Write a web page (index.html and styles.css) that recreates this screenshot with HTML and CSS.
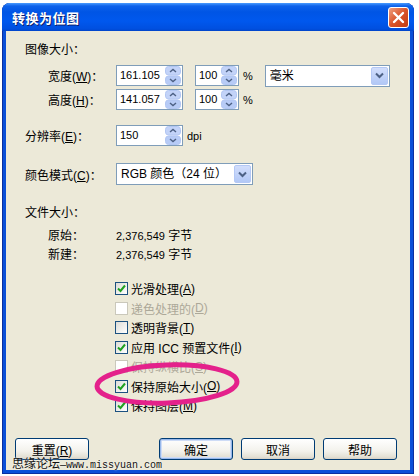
FILE: index.html
```html
<!DOCTYPE html>
<html lang="zh-CN">
<head>
  <meta charset="UTF-8" />
  <title>转换为位图</title>
  <link rel="stylesheet" href="styles.css">
</head>
<body>
  <div class="window">
    <div class="titlebar">
      <span class="title">转换为位图</span>
      <span class="close">
        <svg width="13" height="13" viewBox="0 0 13 13"><path d="M2 2 L11 11 M11 2 L2 11" stroke="#fff" stroke-width="2.4" stroke-linecap="round"/></svg>
      </span>
    </div>
    <div class="client">
      <div class="group-title">图像大小：</div>
      <div class="row size-row first">
        <span class="label sub">宽度(<u>W</u>)：</span>
        <div class="spin num-box"><span class="val">161.105</span><span class="spin-btn"><svg width="16" height="19" viewBox="0 0 16 19"><rect x="0.5" y="0.5" width="15" height="8.5" rx="3" fill="#c3d3f8" stroke="#b2c6f2"/><rect x="0.5" y="10" width="15" height="8.5" rx="3" fill="#b7cbf6" stroke="#b2c6f2"/><path d="M5 6 L8 3.5 L11 6 M5 13 L8 15.5 L11 13" fill="none" stroke="#4d6185" stroke-width="1.4"/></svg></span></div>
        <div class="spin pct-box"><span class="val">100</span><span class="spin-btn"><svg width="16" height="19" viewBox="0 0 16 19"><rect x="0.5" y="0.5" width="15" height="8.5" rx="3" fill="#c3d3f8" stroke="#b2c6f2"/><rect x="0.5" y="10" width="15" height="8.5" rx="3" fill="#b7cbf6" stroke="#b2c6f2"/><path d="M5 6 L8 3.5 L11 6 M5 13 L8 15.5 L11 13" fill="none" stroke="#4d6185" stroke-width="1.4"/></svg></span></div>
        <span class="unit">%</span>
        <div class="select unit-select"><span class="txt">毫米</span><span class="drop"><svg width="9" height="7" viewBox="0 0 9 7"><path d="M1 1.5 L4.5 5 L8 1.5" fill="none" stroke="#4d6185" stroke-width="2"/></svg></span></div>
      </div>
      <div class="row size-row">
        <span class="label sub">高度(<u>H</u>)：</span>
        <div class="spin num-box"><span class="val">141.057</span><span class="spin-btn"><svg width="16" height="19" viewBox="0 0 16 19"><rect x="0.5" y="0.5" width="15" height="8.5" rx="3" fill="#c3d3f8" stroke="#b2c6f2"/><rect x="0.5" y="10" width="15" height="8.5" rx="3" fill="#b7cbf6" stroke="#b2c6f2"/><path d="M5 6 L8 3.5 L11 6 M5 13 L8 15.5 L11 13" fill="none" stroke="#4d6185" stroke-width="1.4"/></svg></span></div>
        <div class="spin pct-box"><span class="val">100</span><span class="spin-btn"><svg width="16" height="19" viewBox="0 0 16 19"><rect x="0.5" y="0.5" width="15" height="8.5" rx="3" fill="#c3d3f8" stroke="#b2c6f2"/><rect x="0.5" y="10" width="15" height="8.5" rx="3" fill="#b7cbf6" stroke="#b2c6f2"/><path d="M5 6 L8 3.5 L11 6 M5 13 L8 15.5 L11 13" fill="none" stroke="#4d6185" stroke-width="1.4"/></svg></span></div>
        <span class="unit">%</span>
      </div>
      <div class="row res-row">
        <span class="label">分辨率(<u>E</u>)：</span>
        <div class="spin num-box"><span class="val">150</span><span class="spin-btn"><svg width="16" height="19" viewBox="0 0 16 19"><rect x="0.5" y="0.5" width="15" height="8.5" rx="3" fill="#c3d3f8" stroke="#b2c6f2"/><rect x="0.5" y="10" width="15" height="8.5" rx="3" fill="#b7cbf6" stroke="#b2c6f2"/><path d="M5 6 L8 3.5 L11 6 M5 13 L8 15.5 L11 13" fill="none" stroke="#4d6185" stroke-width="1.4"/></svg></span></div>
        <span class="unit dpi">dpi</span>
      </div>
      <div class="row mode-row">
        <span class="label">颜色模式(<u>C</u>)：</span>
        <div class="select mode-select"><span class="txt">RGB 颜色（24 位）</span><span class="drop"><svg width="9" height="7" viewBox="0 0 9 7"><path d="M1 1.5 L4.5 5 L8 1.5" fill="none" stroke="#4d6185" stroke-width="2"/></svg></span></div>
      </div>
      <div class="group-title file-title">文件大小：</div>
      <div class="info-row first">
        <span class="label sub">原始：</span>
        <span class="num">2,376,549</span>&nbsp;字节
      </div>
      <div class="info-row">
        <span class="label sub">新建：</span>
        <span class="num">2,376,549</span>&nbsp;字节
      </div>
      <div class="checks">
        <div class="check on"><span class="box"><svg width="11" height="11" viewBox="0 0 11 11"><path d="M2 5.5 L4.5 8 L9 2.5" fill="none" stroke="#21a121" stroke-width="2"/></svg></span>光滑处理(<u>A</u>)</div>
        <div class="check disabled"><span class="box"></span>递色处理的(<u>D</u>)</div>
        <div class="check"><span class="box"></span>透明背景(<u>T</u>)</div>
        <div class="check on"><span class="box"><svg width="11" height="11" viewBox="0 0 11 11"><path d="M2 5.5 L4.5 8 L9 2.5" fill="none" stroke="#21a121" stroke-width="2"/></svg></span>应用 ICC 预置文件(<u>I</u>)</div>
        <div class="check disabled"><span class="box"></span>保持纵横比(<u>S</u>)</div>
        <div class="check on"><span class="box"><svg width="11" height="11" viewBox="0 0 11 11"><path d="M2 5.5 L4.5 8 L9 2.5" fill="none" stroke="#21a121" stroke-width="2"/></svg></span>保持原始大小(<u>O</u>)</div>
        <div class="check on"><span class="box"><svg width="11" height="11" viewBox="0 0 11 11"><path d="M2 5.5 L4.5 8 L9 2.5" fill="none" stroke="#21a121" stroke-width="2"/></svg></span>保持图层(<u>M</u>)</div>
      </div>
      <div class="buttons">
        <button class="btn">重置(<u>R</u>)</button>
        <button class="btn default ok">确定</button>
        <button class="btn">取消</button>
        <button class="btn">帮助</button>
      </div>
    </div>
    <svg class="mark" width="154" height="54" viewBox="0 0 154 54">
      <ellipse cx="76" cy="26" rx="70" ry="19" transform="rotate(-2 76 26)" fill="none" stroke="#e4218b" stroke-width="5"/>
    </svg>
    <div class="watermark">思缘论坛<span class="site">—www.missyuan.com</span></div>
  </div>
</body>
</html>
```

FILE: styles.css
```css
body {
  margin: 0;
  background: #fff;
  font-family: "Liberation Sans", "Noto Sans CJK SC", sans-serif;
  font-size: 12px;
  color: #000;
}
.window {
  position: relative;
  width: 412px;
  margin: 3px 0 0 2px;
  padding-bottom: 4px;
  background: #0a4fd8;
  border-radius: 8px 8px 0 0;
  box-shadow: inset 1px 0 #0a2fa0, inset -1px 0 #0a2fa0, inset 0 -1px #0a2fa0;
}
.titlebar {
  height: 28px;
  display: flex;
  align-items: center;
  justify-content: space-between;
  padding: 0 5px 0 10px;
  border-radius: 8px 8px 0 0;
  background: linear-gradient(#4a9cff 0, #0f62ea 3px, #0055e5 9px, #0058ee 18px, #004fdf 26px, #0044c8 28px);
}
.title {
  color: #fff;
  font-weight: bold;
  font-size: 13px;
  text-shadow: 1px 1px #0a1e6e;
  letter-spacing: 0.5px;
}
.close {
  width: 19px;
  height: 19px;
  display: flex;
  align-items: center;
  justify-content: center;
  border: 1px solid #fff;
  border-radius: 3px;
  background: linear-gradient(135deg, #f0a080, #d9532a 50%, #c13c12);
}
.client {
  margin: 0 4px;
  height: 439px;
  box-sizing: border-box;
  padding: 0 0 10px 19px;
  background: #ece9d8;
  display: flex;
  flex-direction: column;
}
.group-title {
  line-height: 16px;
  margin-top: 11px;
}
.file-title {
  margin-top: 20px;
}
.row {
  display: flex;
  align-items: center;
  height: 21px;
}
.size-row {
  margin-top: 3px;
}
.size-row.first {
  margin-top: 7px;
}
.res-row {
  margin-top: 15px;
}
.mode-row {
  margin-top: 17px;
  height: 22px;
}
.label {
  width: 91px;
  flex-shrink: 0;
  box-sizing: border-box;
}
.label.sub {
  padding-left: 23px;
}
.spin {
  display: flex;
  height: 21px;
  box-sizing: border-box;
  border: 1px solid #7f9db9;
  background: #fff;
}
.spin .val {
  flex: 1;
  padding-left: 3px;
  line-height: 19px;
  font-size: 11px;
}
.spin-btn {
  display: flex;
  margin: 0 1px 0 0;
}
.num-box {
  width: 67px;
}
.pct-box {
  width: 44px;
  margin-left: 12px;
}
.unit {
  margin-left: 4px;
  font-size: 11px;
}
.unit.dpi {
  margin-left: 4px;
}
.select {
  display: flex;
  height: 22px;
  box-sizing: border-box;
  border: 1px solid #7f9db9;
  background: #fff;
}
.select .txt {
  flex: 1;
  padding-left: 4px;
  line-height: 20px;
}
.drop {
  width: 15px;
  margin: 1px;
  display: flex;
  align-items: center;
  justify-content: center;
  border: 1px solid #b4c8f5;
  border-radius: 2px;
  background: linear-gradient(#d2defc, #b2c8f6);
}
.unit-select {
  width: 125px;
  margin-left: 12px;
}
.mode-select {
  width: 137px;
}
.info-row {
  display: flex;
  align-items: center;
  line-height: 16px;
  margin-top: 3px;
}
.info-row.first {
  margin-top: 7px;
}
.num {
  font-size: 11px;
}
.checks {
  margin-top: 16px;
  padding-left: 90px;
}
.check {
  display: flex;
  align-items: center;
  height: 19.5px;
}
.box {
  width: 13px;
  height: 13px;
  box-sizing: border-box;
  margin-right: 3px;
  border: 1px solid #1c5180;
  background: linear-gradient(135deg, #dcdcd7, #fff);
  display: flex;
  align-items: center;
  justify-content: center;
}
.check.disabled {
  color: #aca899;
}
.check.disabled .box {
  border-color: #cac8bb;
  background: #fff;
}
.buttons {
  margin-top: auto;
  margin-left: -10px;
  margin-right: 13px;
  display: flex;
  gap: 8px;
}
.btn {
  width: 74px;
  height: 22px;
  padding: 0;
  border: 1px solid #003c74;
  border-radius: 3px;
  background: linear-gradient(#fff, #f3f2ec 60%, #e3e0d4 90%, #d6d0c5);
  font-family: "Liberation Sans", "Noto Sans CJK SC", sans-serif;
  font-size: 12px;
  color: #000;
}
.btn.ok {
  margin-left: auto;
}
.btn.default {
  box-shadow: inset 0 0 0 1px #98b8ea, inset 0 0 0 2px #cedcf6;
}
.mark {
  position: absolute;
  left: 89px;
  top: 355px;
}
.watermark {
  position: absolute;
  left: 10px;
  top: 451px;
  font-size: 12px;
  color: #111;
  text-shadow: 0 0 2px #fff;
}
.watermark .site {
  font-family: "Liberation Mono", monospace;
  font-size: 10px;
}
```
